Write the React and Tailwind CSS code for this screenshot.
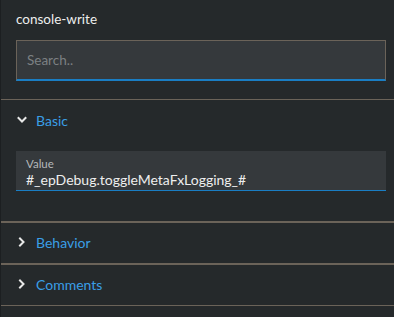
import React from "react";

function Chevron({ open }) {
  return (
    <svg width="10" height="10" viewBox="0 0 10 10" className="shrink-0">
      {open ? (
        <path d="M1.5 3 L5 6.5 L8.5 3" fill="none" stroke="#e8e8e8" strokeWidth="2" strokeLinecap="square" />
      ) : (
        <path d="M3 1.5 L6.5 5 L3 8.5" fill="none" stroke="#e8e8e8" strokeWidth="2" strokeLinecap="square" />
      )}
    </svg>
  );
}

function SectionHeader({ label, open }) {
  return (
    <div className="flex items-center gap-[9px] h-[40px] pl-[16px] pb-[2px]">
      <Chevron open={open} />
      <span className="text-[14px] text-[#3a9ee6]">{label}</span>
    </div>
  );
}

export default function App() {
  return (
    <div
      className="w-[394px] h-[317px] bg-[#25292b] border-l border-[#1c1f21] overflow-hidden text-[#e6e6e6]"
      style={{ fontFamily: 'Lato, "Noto Sans", sans-serif' }}
    >
      <div className="pl-[15px] pr-[8px] pt-[8px] pb-[18px]">
        <div className="text-[13.5px] h-[22px] leading-[22px] text-[#eeeeee]">console-write</div>
        <div className="mt-[10px] h-[41px] bg-[#35393c] border border-[#6b6359] border-b-2 border-b-[#1a7ec4] flex items-center px-[10px]">
          <span className="text-[13.5px] text-[#7c8083]">Search..</span>
        </div>
      </div>
      <div className="border-t border-[#6b6359] pt-[1px]">
        <SectionHeader label="Basic" open />
        <div className="pl-[15px] pr-[8px] pt-[10px] pb-[30px]">
          <div className="h-[40px] bg-[#35393c] border-b border-[#1a7ec4] px-[10px] pt-[6px]">
            <div className="text-[11.5px] leading-[14px] text-[#b4b8ba]">Value</div>
            <div className="text-[14px] leading-[18px] text-[#eeeeee]">#_epDebug.toggleMetaFxLogging_#</div>
          </div>
        </div>
      </div>
      <div className="border-t-2 border-[#6b6359]">
        <SectionHeader label="Behavior" />
      </div>
      <div className="border-t-2 border-[#6b6359]">
        <SectionHeader label="Comments" />
      </div>
      <div className="border-t border-[#6b6359]" />
    </div>
  );
}
